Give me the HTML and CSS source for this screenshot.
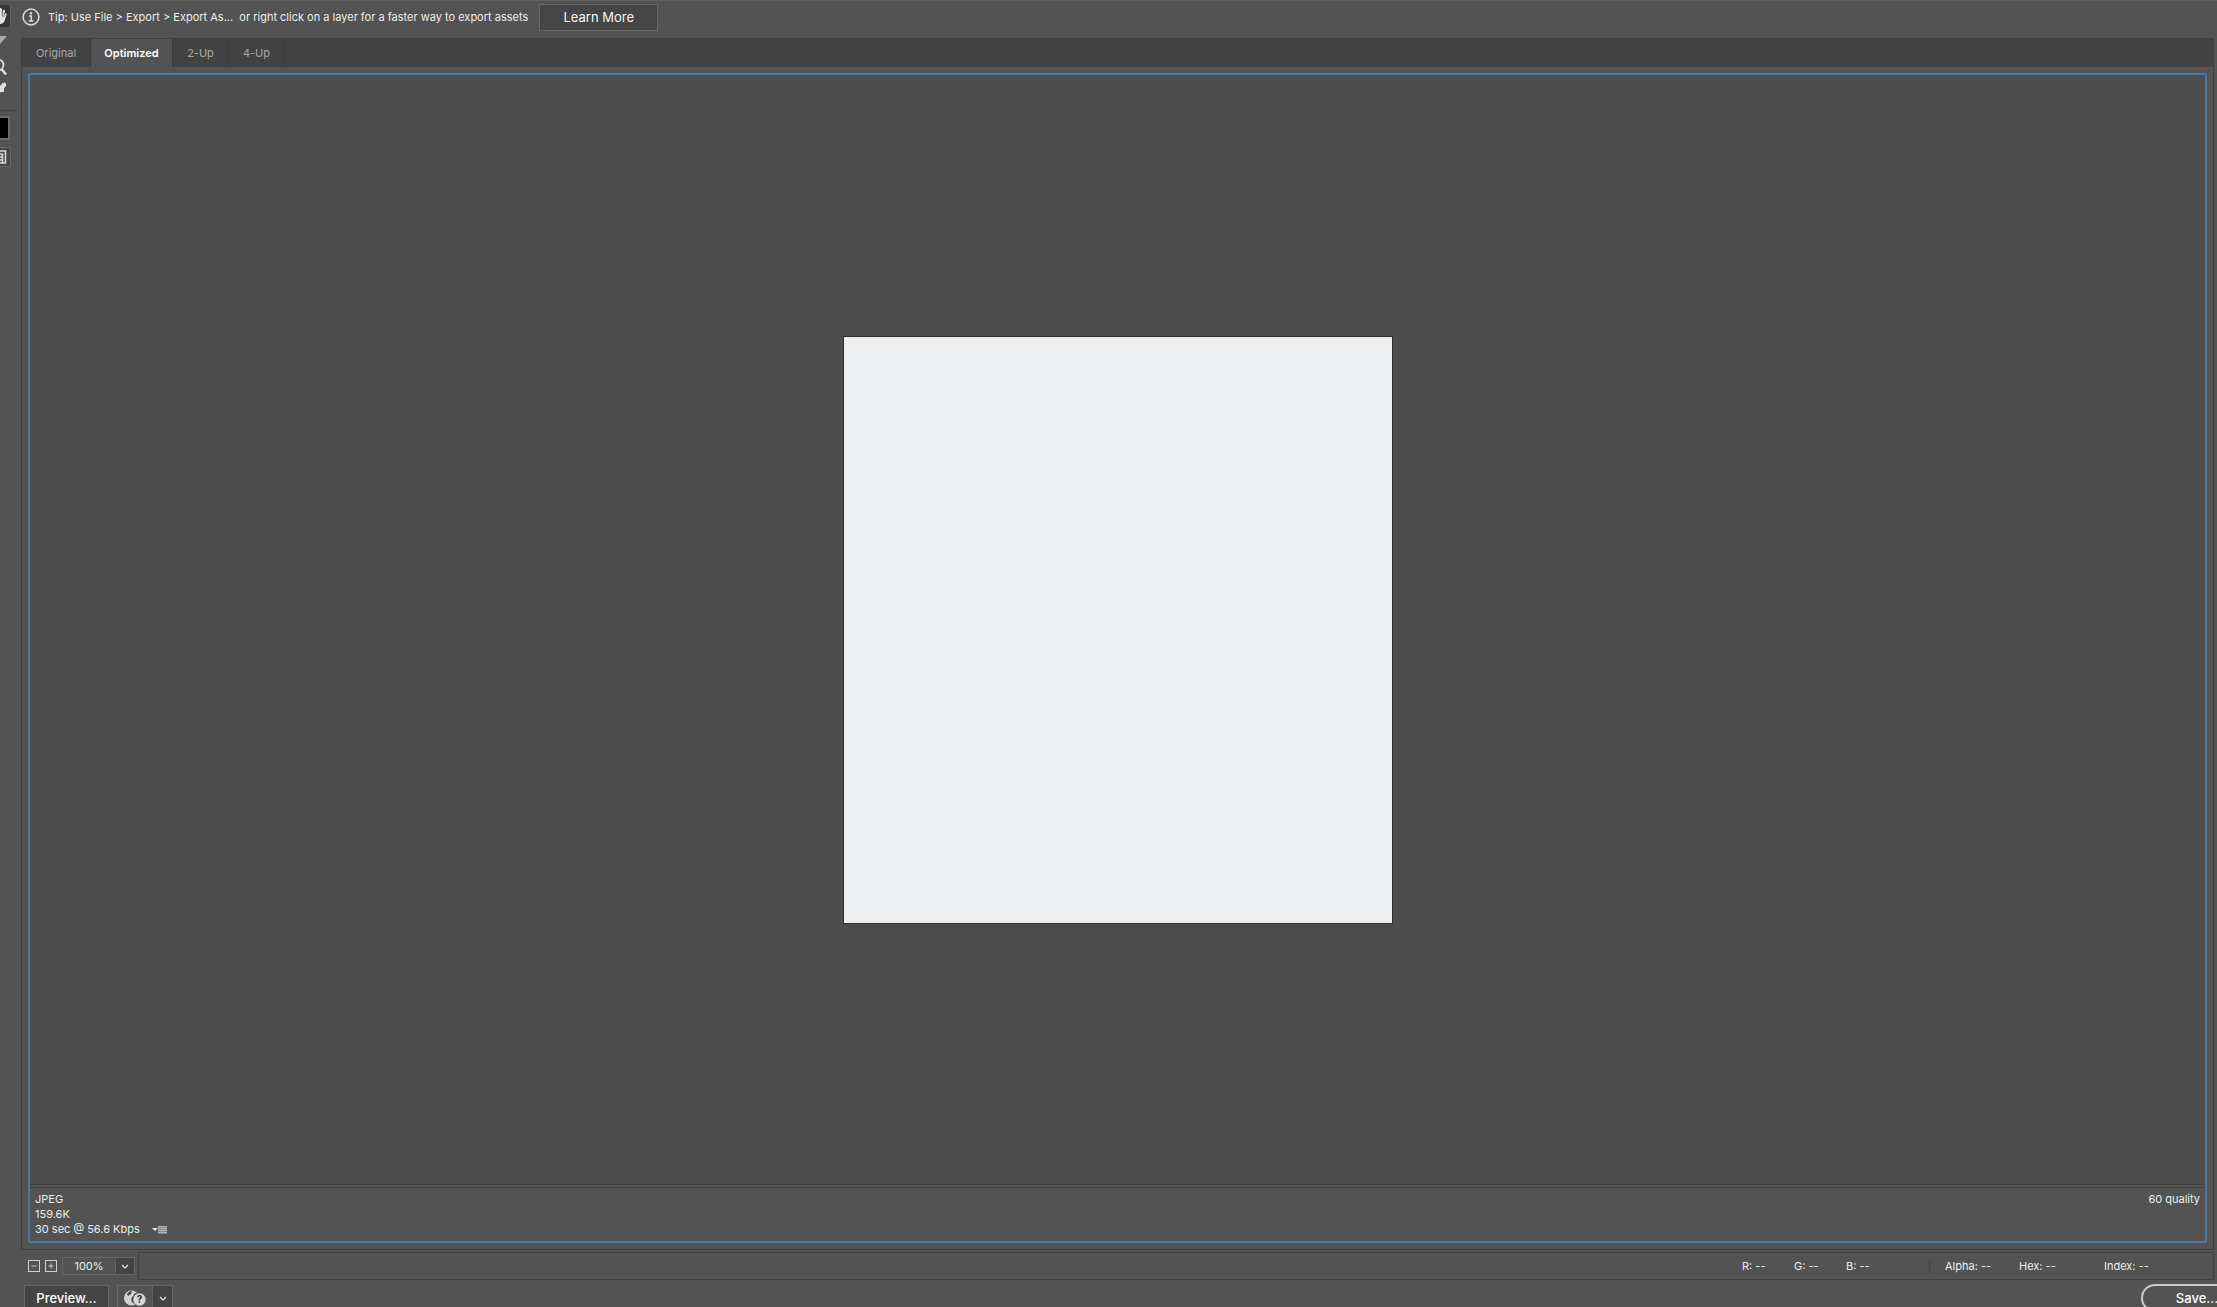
FILE: index.html
```html
<!DOCTYPE html>
<html lang="en">
<head>
<meta charset="utf-8">
<title>Save for Web</title>
<link rel="stylesheet" href="styles.css">
</head>
<body>
<div class="dialog">
  <aside class="rail">
    <button class="tool tool-active" aria-label="Hand tool">
      <svg width="22" height="22" viewBox="0 0 22 22"><path d="M5 13L2 9.500Q3 7 5 9L7 12L6 5Q7.500 2.500 9 5L10 10V4Q11.500 2 13 4V10L14 5Q16 4 16 6L15 11L16 8.500Q18 7.500 17.500 10L15.500 16Q14 19 11 19Q8 19 5 13Z" fill="#e4e4e4"/><path d="M9.500 6V12M13.300 6V12M15.500 8L14.800 12" stroke="#555" stroke-width=".7"/></svg>
    </button>
    <button class="tool" aria-label="Slice select tool">
      <svg width="22" height="22" viewBox="0 0 22 22"><path d="M2 5H18L10 14Z" fill="#a9a9a9"/></svg>
    </button>
    <button class="tool" aria-label="Zoom tool">
      <svg width="22" height="22" viewBox="0 0 22 22" fill="none" stroke="#dedede"><circle cx="9" cy="12" r="5.500" stroke-width="1.800"/><path d="M12.500 16L17 21.500" stroke-width="2.500"/></svg>
    </button>
    <button class="tool" aria-label="Eyedropper tool">
      <svg width="22" height="22" viewBox="0 0 22 22"><path d="M12 10Q13 7 16 7.500Q18 9 16.500 12L15 13V17L12 17L6 22L4 20L10 14L9 12Z" fill="#dedede"/></svg>
    </button>
    <hr class="rail-line">
    <button class="swatch" aria-label="Eyedropper color"></button>
    <button class="tool tool-framed" aria-label="Toggle slices visibility">
      <svg width="20" height="18" viewBox="0 0 20 18" fill="none" stroke="#d8d8d8" stroke-width="1.500"><path d="M3 3H15.500V15H3ZM3 6H12.500V15M6 9H12M6 12H12"/></svg>
    </button>
  </aside>

  <main class="main">
    <header class="tip">
      <svg class="tip-icon" width="18" height="18" viewBox="0 0 18 18" fill="none" stroke="#dcdcdc"><circle cx="9" cy="9" r="7.900" stroke-width="1.500"/><path d="M7 8H9.300V13M6.800 13H11.300" stroke-width="1.500"/><circle cx="9" cy="5.300" r="1.200" fill="#dcdcdc" stroke="none"/></svg>
      <span class="tip-text">Tip: Use File &gt; Export &gt; Export As...&nbsp; or right click on a layer for a faster way to export assets</span>
      <button class="learn">Learn More</button>
    </header>

    <section class="panel">
      <nav class="tabs">
        <button class="tab tab-wide">Original</button>
        <button class="tab tab-wide tab-on">Optimized</button>
        <button class="tab">2-Up</button>
        <button class="tab">4-Up</button>
      </nav>
      <div class="view">
        <div class="canvas"><div class="art"></div></div>
        <footer class="info">
          <div class="info-left">
            <div>JPEG</div>
            <div>159.6K</div>
            <div class="speed">30 sec @ 56.6 Kbps
              <button class="speed-menu" aria-label="Select download speed"><svg width="15" height="8" viewBox="0 0 15 8"><path d="M0 2H6L3 5Z" fill="#eee"/><rect x="6" width="9" height="8" fill="#858585"/><path d="M6 .5H15M6 2.500H15M6 4.500H15M6 6.500H15" stroke="#b5b5b5"/></svg></button>
            </div>
          </div>
          <div>60 quality</div>
        </footer>
      </div>
    </section>

    <div class="status">
      <div class="zoom">
        <button class="step" aria-label="Zoom out"><svg width="12" height="12" viewBox="0 0 12 12" fill="none" stroke="#cfcfcf"><rect x=".5" y=".5" width="11" height="11"/><path d="M3.500 6H8.500"/></svg></button>
        <button class="step" aria-label="Zoom in"><svg width="12" height="12" viewBox="0 0 12 12" fill="none" stroke="#cfcfcf"><rect x=".5" y=".5" width="11" height="11"/><path d="M3.500 6H8.500M6 3.500V8.500"/></svg></button>
        <div class="combo">
          <input class="combo-text" value="100%" aria-label="Zoom level">
          <button class="drop" aria-label="Zoom presets"><svg width="8" height="5" viewBox="0 0 8 5"><path d="M1 1L4 4L7 1" fill="none" stroke="#e6e6e6" stroke-width="1.200"/></svg></button>
        </div>
      </div>
      <div class="readout">
        <span class="chan">R: --</span>
        <span class="chan">G: --</span>
        <span class="chan chan-last">B: --</span>
        <span class="alpha">Alpha: --</span>
        <span class="hex">Hex: --</span>
        <span class="index">Index: --</span>
      </div>
    </div>

    <div class="actions">
      <button class="preview">Preview...</button>
      <div class="browser">
        <button class="browser-main" aria-label="Preview in browser"><svg width="24" height="18" viewBox="0 0 24 18"><circle cx="8.500" cy="8" r="7.500" fill="#d2d2d2"/><path d="M4 4Q6 1 9 1L8 4L5 6ZM10 6L12 3L15 3L12 7L10 10L11 14L9 12L8 9Z" fill="#444"/><circle cx="16.500" cy="9.500" r="6.500" fill="#d6d6d6" stroke="#555" stroke-width=".6"/><text x="16.500" y="13" class="qmark">?</text></svg></button>
        <button class="drop" aria-label="Choose browser"><svg width="8" height="5" viewBox="0 0 8 5"><path d="M1 1L4 4L7 1" fill="none" stroke="#e6e6e6" stroke-width="1.200"/></svg></button>
      </div>
      <button class="save">Save...</button>
    </div>
  </main>
</div>
</body>
</html>
```
FILE: styles.css
```css
* { box-sizing: border-box; }
body { margin: 0; background: #535353; color: #ececec; font: 11px/15px Inter, "Liberation Sans", sans-serif; }
button, input { font: inherit; color: inherit; margin: 0; padding: 0; border: 0; background: none; border-radius: 0; }
svg { display: block; flex: none; }

.dialog { display: flex; height: 100vh; overflow: hidden; border-top: 1px solid #5e5e5e; }

/* tool rail */
.rail { flex: none; width: 21px; display: flex; flex-direction: column; align-items: flex-start; padding-top: 4px; overflow: hidden; }
.tool { display: flex; align-items: center; justify-content: center; flex: none; width: 22px; height: 22px; margin-left: -11px; }
.tool-active { background: #363636; border-right: 1px solid #606060; margin-bottom: 4px; }
.rail-line { width: 17px; height: 1px; border: 0; background: #424242; margin: 13px 0 5px; }
.swatch { flex: none; width: 31px; height: 24px; margin-left: -21px; background: #000; border: 2px solid #6a6a6a; }
.tool-framed { margin-top: 7px; height: 20px; border: 1px solid #666; background: #484848; }

/* right side */
.main { flex: 1; min-width: 0; display: flex; flex-direction: column; }
.tip { flex: none; display: flex; align-items: center; height: 37px; padding-bottom: 5px; }
.tip-icon { margin: 0 8px 0 1px; }
.tip-text { white-space: nowrap; }
.learn { width: 119px; height: 27px; margin-left: 11px; background: #454545; border: 1px solid #666; color: #f5f5f5; font-size: 13px; }

.panel { flex: 1; min-height: 0; display: flex; flex-direction: column; margin-right: 3px; border: 1px solid #404040; }
.tabs { flex: none; display: flex; height: 28px; background: #424242; }
.tab { width: 56px; border-right: 1px solid #393939; color: #a8a8a8; }
.tab-wide { width: 69px; }
.tab-on { width: 82px; background: #535353; color: #fff; font-weight: 600; }
.view { flex: 1; min-height: 0; display: flex; flex-direction: column; margin: 6px; border: 2px solid #4e78a5; border-radius: 2px; }
.canvas { flex: 1; min-height: 0; display: flex; align-items: center; justify-content: center; background: #4d4d4d; border-bottom: 1px solid #404040; }
.art { width: 550px; height: 588px; background: #eeeff1; border: 1px solid #2e2e2e; }
.info { flex: none; display: flex; justify-content: space-between; margin-top: 2px; height: 54px; padding: 4px 5px; border-top: 1px solid #404040; }
.speed { display: flex; align-items: center; gap: 12px; }

/* zoom and colour readout */
.status { flex: none; display: flex; height: 28px; margin: 2px 3px 0 7px; }
.zoom { flex: none; width: 110px; display: flex; align-items: center; gap: 5px; }
.combo { display: flex; width: 73px; height: 18px; border: 1px solid #666; }
.combo-text { width: 52px; text-align: center; }
.drop { flex: 1; display: flex; align-items: center; justify-content: center; background: #444; border-left: 1px solid #606060; }
.readout { flex: 1; display: flex; align-items: center; justify-content: flex-end; border: 1px solid #424242; }
.chan { width: 52px; }
.chan-last { width: 83px; }
.alpha { width: 90px; padding-left: 15px; border-left: 1px solid #464646; }
.hex { width: 85px; }
.index { width: 109px; }

/* bottom buttons run past the window edge */
.actions { flex: none; display: flex; height: 27px; padding: 5px 0 0 3px; overflow: hidden; }
.preview { flex: none; width: 85px; height: 27px; background: #444; border: 1px solid #666; color: #fff; font-size: 13px; font-weight: 500; }
.browser { flex: none; display: flex; width: 56px; height: 27px; margin-left: 8px; border: 1px solid #666; }
.browser-main { width: 34px; display: flex; align-items: center; justify-content: center; }
.qmark { font: 700 10px Inter, sans-serif; fill: #333; text-anchor: middle; }
.save { flex: none; width: 112px; height: 28px; margin: -1px -36px 0 auto; border: 2px solid #c8c8c8; border-radius: 14px; color: #fff; font-size: 13px; font-weight: 500; }
```
